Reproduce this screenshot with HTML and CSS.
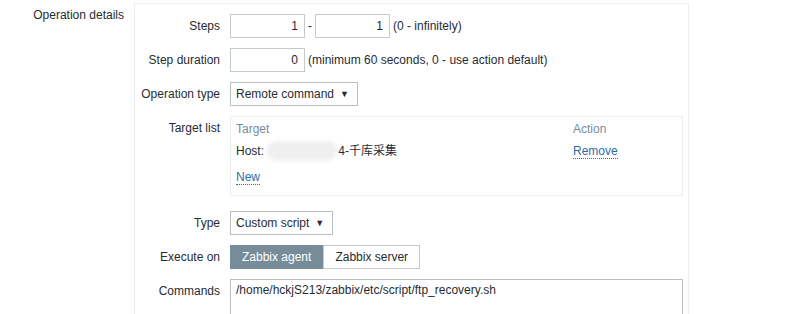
FILE: index.html
```html
<!DOCTYPE html>
<html lang="en">
 <head>
  <title>Operation details</title>
  <meta charset="utf-8"/>
  <link rel="stylesheet" href="styles.css">
 </head>
 <body>
	<div id="wrap">
		<div class="side-label">Operation details</div>
		<div class="op-box">
			<div class="form-grid">
				<label class="lbl">Steps</label>
				<div class="ctl">
					<input class="num" type="text" value="1" readonly/><span class="sep">-</span><input class="num" type="text" value="1" readonly/><span class="hint">(0 - infinitely)</span>
				</div>

				<label class="lbl">Step duration</label>
				<div class="ctl">
					<input class="num" type="text" value="0" readonly/><span class="hint">(minimum 60 seconds, 0 - use action default)</span>
				</div>

				<label class="lbl">Operation type</label>
				<div class="ctl">
					<div class="sel">Remote command<span class="arrow">&#9660;</span></div>
				</div>

				<label class="lbl lbl-top">Target list</label>
				<div class="ctl">
					<div class="target-box">
						<div class="trow thead">
							<span>Target</span><span>Action</span>
						</div>
						<div class="trow host">
							<span>Host: <i class="blur"></i>4-千库采集</span><span><a class="link" href="#">Remove</a></span>
						</div>
						<div class="trow newrow">
							<span><a class="link" href="#">New</a></span>
						</div>
					</div>
				</div>

				<label class="lbl">Type</label>
				<div class="ctl">
					<div class="sel">Custom script<span class="arrow">&#9660;</span></div>
				</div>

				<label class="lbl">Execute on</label>
				<div class="ctl">
					<div class="radio-group">
						<span class="radio on">Zabbix agent</span><span class="radio">Zabbix server</span>
					</div>
				</div>

				<label class="lbl lbl-top">Commands</label>
				<div class="ctl">
					<div class="cmd">/home/hckjS213/zabbix/etc/script/ftp_recovery.sh</div>
				</div>
			</div>
		</div>
	</div>
 </body>
</html>
```

FILE: styles.css
```css
*{margin:0; padding:0; box-sizing:border-box;}
body{font-family:"Liberation Sans", Arial, "Noto Sans CJK SC", sans-serif; font-size:12px; color:#1f2c33; background:#fff;}

#wrap{display:flex; align-items:flex-start;}
.side-label{width:124px; text-align:right; line-height:14px; padding-top:8px;}
.op-box{width:555px; height:400px; margin:3px 0 0 10px; border:1px solid #ebeef0; padding:10px 5px 0 0;}

.form-grid{display:grid; grid-template-columns:85px 1fr; column-gap:10px; row-gap:10px;}
.lbl{text-align:right; line-height:24px; white-space:nowrap;}
.lbl-top{line-height:14px; padding-top:5px;}
.ctl{display:flex; align-items:center; line-height:24px;}

.num{width:75px; height:24px; border:1px solid #c3cacd; padding:0 6px; text-align:right;
font:inherit; color:#1f2c33; outline:none;}
.sep{margin:0 3px;}
.hint{margin-left:3px;}

.sel{height:24px; border:1px solid #b5bfc4; padding:0 8px 0 5px; line-height:22px; display:flex; align-items:center;}
.sel .arrow{font-size:9px; margin-left:6px;}

.target-box{width:453px; border:1px solid #ebeef0; padding:5px 5px 11px; margin-bottom:5px; line-height:14px;}
.trow{display:grid; grid-template-columns:337px 1fr;}
.thead{color:#768d99;}
.host{margin-top:8px;}
.newrow{margin-top:11px;}
.blur{display:inline-block; width:70px; height:20px; vertical-align:middle; margin:-4px 1px -2px 0;
background:#efefef; border-radius:10px; filter:blur(2px);}
.link{color:#2b6ea5; text-decoration:none; border-bottom:1px dotted #2b6ea5;}

.radio-group{display:flex;}
.radio{height:24px; line-height:22px; padding:0 11px; border:1px solid #c3cacd; background:#fff;}
.radio.on{background:#768d99; border-color:#768d99; color:#fff;}

.cmd{width:453px; height:70px; border:1px solid #b5bfc4; padding:3px 5px; line-height:14px;}
```
